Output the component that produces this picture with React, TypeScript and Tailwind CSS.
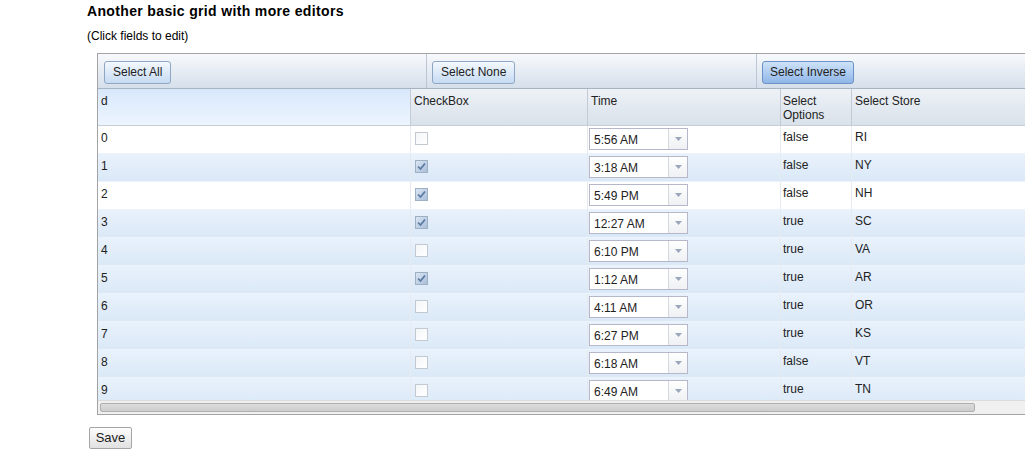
import React from "react";

type Row = {
  id: number;
  checked: boolean;
  time: string;
  opt: string;
  store: string;
  blue: boolean;
};

const rows: Row[] = [
  { id: 0, checked: false, time: "5:56 AM", opt: "false", store: "RI", blue: false },
  { id: 1, checked: true, time: "3:18 AM", opt: "false", store: "NY", blue: true },
  { id: 2, checked: true, time: "5:49 PM", opt: "false", store: "NH", blue: false },
  { id: 3, checked: true, time: "12:27 AM", opt: "true", store: "SC", blue: true },
  { id: 4, checked: false, time: "6:10 PM", opt: "true", store: "VA", blue: true },
  { id: 5, checked: true, time: "1:12 AM", opt: "true", store: "AR", blue: true },
  { id: 6, checked: false, time: "4:11 AM", opt: "true", store: "OR", blue: true },
  { id: 7, checked: false, time: "6:27 PM", opt: "true", store: "KS", blue: true },
  { id: 8, checked: false, time: "6:18 AM", opt: "false", store: "VT", blue: true },
  { id: 9, checked: false, time: "6:49 AM", opt: "true", store: "TN", blue: true },
];

function CheckBox({ checked }: { checked: boolean }) {
  return (
    <div
      className={
        checked
          ? "w-[13px] h-[13px] border border-[#9fb0c4] bg-gradient-to-br from-[#dbe6f3] to-[#aabfd9] flex items-center justify-center"
          : "w-[13px] h-[13px] border border-[#c3c9d0] bg-gradient-to-br from-[#f4f6f8] to-[#ffffff]"
      }
    >
      {checked && (
        <svg width="9" height="9" viewBox="0 0 9 9">
          <path d="M1 4.5 L3.5 7 L8 1.5" fill="none" stroke="#5a7aa3" strokeWidth="1.7" />
        </svg>
      )}
    </div>
  );
}

function TimeCombo({ value }: { value: string }) {
  return (
    <div className="flex w-[99px] h-[22px] border border-[#b5b8c8] bg-white">
      <div className="flex-1 pl-[4px] pt-[4px] leading-[14px] text-[12px]">{value}</div>
      <div className="w-[19px] border-l border-[#d6d9e0] bg-gradient-to-b from-[#ffffff] to-[#eef0f3] flex items-center justify-center">
        <svg width="7" height="4" viewBox="0 0 7 4">
          <path d="M0 0 L7 0 L3.5 4 Z" fill="#9aa7b8" />
        </svg>
      </div>
    </div>
  );
}

function ToolButton({ label, pressed }: { label: string; pressed?: boolean }) {
  return (
    <button
      className={
        pressed
          ? "h-[23px] px-[7px] rounded-[3px] border border-[#6b93c7] bg-gradient-to-b from-[#cfe2f9] to-[#8fb6e8] text-[12px] text-[#222]"
          : "h-[23px] px-[8px] rounded-[3px] border border-[#8fa7c3] bg-gradient-to-b from-[#f3f8fe] to-[#c6dbf3] text-[12px] text-[#222]"
      }
    >
      {label}
    </button>
  );
}

export default function App() {
  return (
    <div
      className="h-[457px] w-full overflow-hidden bg-white pl-[87px] text-black"
      style={{ fontFamily: '"Liberation Sans", Arial, sans-serif' }}
    >
      {/* Heading */}
      <h2 className="pt-[3px] text-[14px] font-bold leading-[16px] tracking-[0.35px]">
        Another basic grid with more editors
      </h2>
      <p className="mt-[10px] text-[12px] leading-[14px]">(Click fields to edit)</p>

      {/* Grid panel */}
      <div className="ml-[10px] mt-[10px] w-[1000px] border border-[#a3a3a3]">
        {/* Toolbar */}
        <div className="flex h-[35px] border-b border-[#a9b4c2] bg-gradient-to-b from-[#f7f9fc] to-[#d5dfeb]">
          <div className="w-[329px] border-r border-[#bcc6d2] pl-[6px] pt-[5px]">
            <ToolButton label="Select All" />
          </div>
          <div className="w-[330px] border-r border-[#bcc6d2] pl-[5px] pt-[5px]">
            <ToolButton label="Select None" />
          </div>
          <div className="flex-1 pl-[5px] pt-[5px]">
            <ToolButton label="Select Inverse" pressed />
          </div>
        </div>

        {/* Header */}
        <div className="flex h-[37px] border-b border-[#c7cdd6] text-[12px] leading-[14px] text-[#222]">
          <div className="w-[313px] border-r border-[#c4cbd4] bg-gradient-to-b from-[#d8e8fb] to-[#edf5fe] px-[3px] pt-[5px]">
            d
          </div>
          <div className="w-[177px] border-r border-[#c4cbd4] bg-gradient-to-b from-[#eef2f7] to-[#d9e1ea] px-[3px] pt-[5px]">
            CheckBox
          </div>
          <div className="w-[193px] border-r border-[#c4cbd4] bg-gradient-to-b from-[#eef2f7] to-[#d9e1ea] px-[3px] pt-[5px]">
            Time
          </div>
          <div className="w-[71px] border-r border-[#c4cbd4] bg-gradient-to-b from-[#eef2f7] to-[#d9e1ea] px-[2px] pt-[5px]">
            Select
            <br />
            Options
          </div>
          <div className="flex-1 bg-gradient-to-b from-[#eef2f7] to-[#d9e1ea] px-[3px] pt-[5px]">
            Select Store
          </div>
        </div>

        {/* Body */}
        <div className="h-[274px] overflow-hidden text-[12px] leading-[14px] text-[#222]">
          {rows.map((r) => (
            <div
              key={r.id}
              className={
                r.blue
                  ? "flex h-[28px] border-b border-[#edf3fa] bg-gradient-to-b from-[#e9f2fc] to-[#dae8f7]"
                  : "flex h-[28px] border-b border-[#edf3fa] bg-white"
              }
            >
              <div className="w-[313px] border-r border-[#e6e9ee] px-[3px] pt-[5px]">{r.id}</div>
              <div className="w-[177px] border-r border-[#e6e9ee] pl-[4px] pt-[6px]">
                <CheckBox checked={r.checked} />
              </div>
              <div className="w-[193px] border-r border-[#e6e9ee] pl-[1px] pt-[2px]">
                <TimeCombo value={r.time} />
              </div>
              <div className="w-[71px] border-r border-[#e6e9ee] px-[2px] pt-[4px]">{r.opt}</div>
              <div className="flex-1 px-[3px] pt-[4px]">{r.store}</div>
            </div>
          ))}
        </div>

        {/* Horizontal scrollbar */}
        <div className="h-[14px] border-t border-[#dcdcdc] bg-[#f0f0f0] pl-[2px] pt-[2px]">
          <div className="h-[9px] w-[875px] rounded-[2px] border border-[#b0b0b0] bg-gradient-to-b from-[#dcdcdc] to-[#cdcdcd]" />
        </div>
      </div>

      {/* Save */}
      <button className="ml-[2px] mt-[12px] h-[22px] w-[43px] rounded-[2px] border border-[#a5a5a5] bg-gradient-to-b from-[#fdfdfd] to-[#e1e1e1] text-[13px] leading-[14px] text-[#222]">
        Save
      </button>
    </div>
  );
}
